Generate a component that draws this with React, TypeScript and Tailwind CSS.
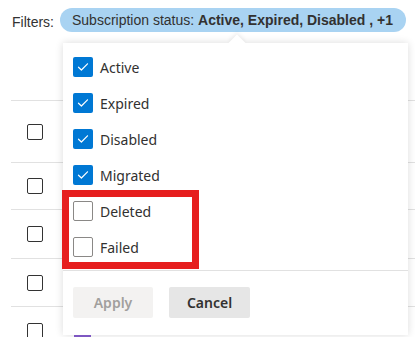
import React from "react";

const statuses = [
  { label: "Active", checked: true },
  { label: "Expired", checked: true },
  { label: "Disabled", checked: true },
  { label: "Migrated", checked: true },
  { label: "Deleted", checked: false },
  { label: "Failed", checked: false },
];

function StatusCheckbox({ checked }: { checked: boolean }) {
  if (checked) {
    return (
      <span className="flex h-5 w-5 items-center justify-center rounded-[2px] bg-[#0078d4]">
        <svg width="12" height="12" viewBox="0 0 12 12" fill="none">
          <path d="M1.5 6.2 4.4 9 10.5 2.8" stroke="white" strokeWidth="1.2" strokeLinecap="round" strokeLinejoin="round" />
        </svg>
      </span>
    );
  }
  return <span className="block h-5 w-5 rounded-[2px] border border-[#8a8886] bg-white" />;
}

export default function App() {
  const rowHeights = ["h-[62px]", "h-[47px]", "h-[49px]", "h-[48px]", "h-[48px]"];

  return (
    <div className="relative h-[337px] w-[415px] overflow-hidden bg-white font-['Liberation_Sans',Arial,sans-serif]">
      <div className="flex h-10 items-start pl-3 pt-2">
        <span className="mt-[4px] text-[14px] text-[#333]">Filters:</span>
        <span className="ml-[6px] flex h-6 w-[346px] items-center rounded-full bg-[#a9d3f2] pl-3 text-[14px] text-[#323130]">
          Subscription status:&nbsp;<b className="font-bold">Active, Expired, Disabled , +1</b>
        </span>
      </div>

      {/* table behind the popover */}
      <div className="ml-[11px] mt-[60px]">
        {rowHeights.map((h, i) => (
          <div key={i} className={`flex items-center border-t border-[#e1e1e1] pl-4 ${h}`}>
            <span className="block h-4 w-4 rounded-[2px] border border-[#333]" />
          </div>
        ))}
      </div>

      {/* popover */}
      <div className="absolute left-[63px] top-[43px] h-[292px] w-[345px] bg-white shadow-[0_0_8px_rgba(0,0,0,0.14)]">
        <div className="absolute -top-[6px] left-[168px] h-3 w-3 rotate-45 bg-white shadow-[-2px_-2px_4px_rgba(0,0,0,0.06)]" />
        <div className="relative bg-white pt-[6px] font-['Noto_Sans','Open_Sans',sans-serif]">
          {statuses.map((s) => (
            <div key={s.label} className="flex h-9 items-center gap-[7px] pl-[10px]">
              <StatusCheckbox checked={s.checked} />
              <span className="text-[14px] text-[#323130]">{s.label}</span>
            </div>
          ))}
          <div className="mt-[5px] border-t border-[#e1e1e1]" />
          <div className="flex gap-4 px-[10px] pt-4">
            <button type="button" className="h-[31px] w-20 rounded-[2px] bg-[#f3f2f1] text-[14px] font-semibold text-[#a19f9d]">
              Apply
            </button>
            <button type="button" className="h-[31px] w-[81px] rounded-[2px] bg-[#e6e6e6] text-[14px] font-semibold text-[#323130]">
              Cancel
            </button>
          </div>
        </div>
      </div>

      {/* partially visible row content below the popover */}
      <div className="absolute left-[74px] top-[335px] h-[2px] w-[17px] bg-[#7e57c2]" />

      {/* annotation box */}
      <div className="absolute left-[62px] top-[190px] h-[79px] w-[137px] border-[7px] border-[#e61e1e]" />
    </div>
  );
}
